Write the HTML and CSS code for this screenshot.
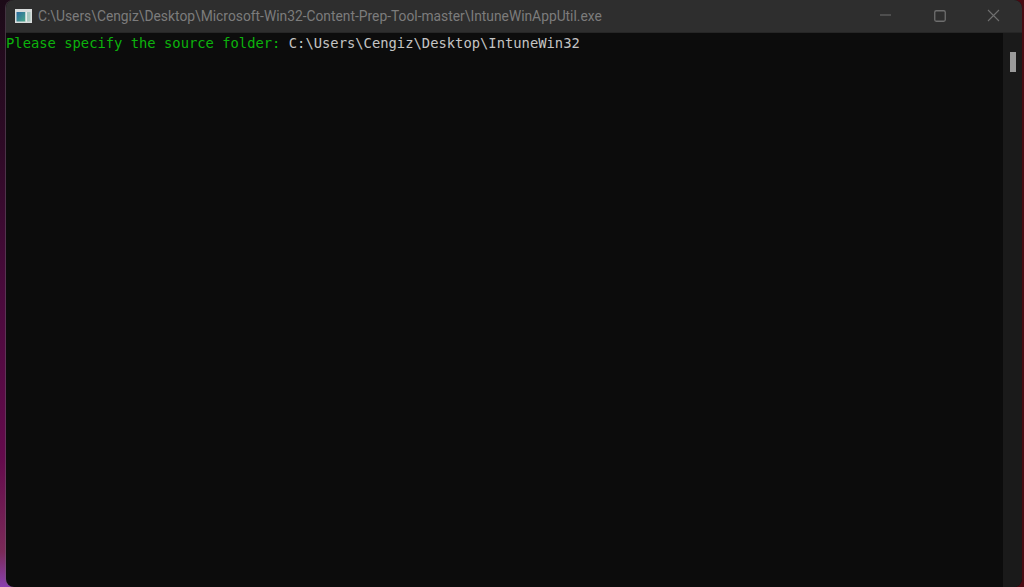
FILE: index.html
```html
<!DOCTYPE html>
<html lang="en">
<head>
<meta charset="utf-8">
<title>IntuneWinAppUtil</title>
<link rel="stylesheet" href="styles.css">
</head>
<body>
<div class="window">
  <header class="titlebar">
    <svg class="app-icon" width="17" height="14" viewBox="0 0 17 14">
      <defs>
        <linearGradient id="pane" x1="0" y1="0" x2="1" y2="1">
          <stop offset="0" stop-color="#2a6aa0"/>
          <stop offset="1" stop-color="#4aa888"/>
        </linearGradient>
      </defs>
      <rect width="17" height="14" fill="#d8dcdc"/>
      <rect x="1.5" y="3" width="9" height="9.5" fill="url(#pane)"/>
      <rect x="10.5" y="3" width="1.5" height="9.5" fill="#e8ecec"/>
      <rect x="12" y="3" width="3.5" height="9.5" fill="#a8c8c0"/>
    </svg>
    <span class="title">C:\Users\Cengiz\Desktop\Microsoft-Win32-Content-Prep-Tool-master\IntuneWinAppUtil.exe</span>
    <div class="controls">
      <svg class="ctl" width="46" height="32" viewBox="0 0 46 32"><path d="M17 15h11" stroke="#6e6e6e" stroke-width="1"/></svg>
      <svg class="ctl" width="46" height="32" viewBox="0 0 46 32"><rect x="17.75" y="10.75" width="10.5" height="10.5" rx="1.5" fill="none" stroke="#6e6e6e" stroke-width="1.3"/></svg>
      <svg class="ctl" width="46" height="32" viewBox="0 0 46 32"><path d="M17 10l11 11M28 10L17 21" stroke="#6e6e6e" stroke-width="1.1" fill="none"/></svg>
    </div>
  </header>
  <main class="body">
    <div class="console"><span class="prompt">Please specify the source folder:</span> <span class="input">C:\Users\Cengiz\Desktop\IntuneWin32</span></div>
    <aside class="scrollbar"><div class="thumb"></div></aside>
  </main>
</div>
</body>
</html>
```
FILE: styles.css
```css
html, body {
  margin: 0;
  height: 100%;
  overflow: hidden;
}
body {
  background:
    linear-gradient(90deg, transparent 1016px, #4a0a12 1016px),
    linear-gradient(180deg, #1c0b18 0%, #2e0a26 25%, #4a0a3c 50%, #640a4c 78%, #7a2a58 94%, #8a40b0 100%);
  padding-left: 6px;
  padding-right: 2px;
  box-sizing: border-box;
}
.window {
  height: 100%;
  display: flex;
  flex-direction: column;
  border-radius: 8px;
  overflow: hidden;
  background: #0c0c0c;
  box-shadow: -1px 0 0 rgba(110, 100, 110, 0.45);
}
.titlebar {
  height: 33px;
  flex: none;
  background: #2e2e2e;
  display: flex;
  align-items: center;
  padding-left: 9px;
  border-bottom: 1px solid #262626;
  box-sizing: border-box;
}
.app-icon {
  flex: none;
  margin-right: 6px;
}
.title {
  flex: 1;
  font: 13.82px/16px "Roboto", "Noto Sans", sans-serif;
  color: #7c7c7c;
  white-space: nowrap;
}
.controls {
  display: flex;
  flex: none;
  margin-right: 5px;
  gap: 8px;
}
.body {
  flex: 1;
  display: flex;
  min-height: 0;
}
.console {
  flex: 1;
  padding-top: 2px;
  font: 13.82px/16px "DejaVu Sans Mono", "Liberation Mono", monospace;
  color: #c4c4c4;
  white-space: pre;
}
.prompt {
  color: #0cb30c;
}
.scrollbar {
  width: 19px;
  flex: none;
  background: #1a1a1a;
  padding-top: 19px;
  padding-left: 7px;
  box-sizing: border-box;
}
.thumb {
  width: 6px;
  height: 20px;
  background: #9a9a9a;
}
```
